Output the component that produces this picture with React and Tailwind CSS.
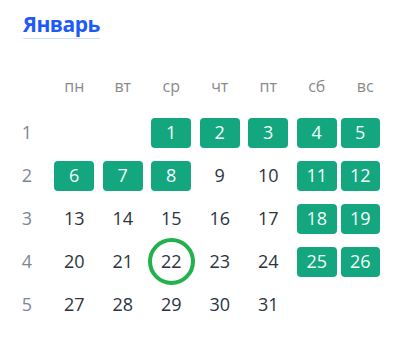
import React from 'react';

const weekdays = ['пн', 'вт', 'ср', 'чт', 'пт', 'сб', 'вс'];

// null = empty cell; marked days are shown in green boxes
const weeks = [
  [null, null, 1, 2, 3, 4, 5],
  [6, 7, 8, 9, 10, 11, 12],
  [13, 14, 15, 16, 17, 18, 19],
  [20, 21, 22, 23, 24, 25, 26],
  [27, 28, 29, 30, 31, null, null],
];

const marked = [1, 2, 3, 4, 5, 6, 7, 8, 11, 12, 18, 19, 25, 26];
const today = 22;

const DayCell = ({ day, last }) => {
  if (day === null) return <div className="h-[43px]" />;

  if (marked.includes(day)) {
    return (
      <div className="h-[43px] flex items-center justify-center">
        <div
          className={
            last
              ? 'w-[40px] h-[30px] mr-[10px] rounded-[4px] bg-[#13a67f] text-[#f3fffa] flex items-center justify-center'
              : 'w-[40px] h-[30px] rounded-[4px] bg-[#13a67f] text-[#f3fffa] flex items-center justify-center'
          }
        >
          {day}
        </div>
      </div>
    );
  }

  if (day === today) {
    return (
      <div className="h-[43px] flex items-center justify-center">
        <div className="w-[47px] h-[47px] shrink-0 rounded-full border-[4px] border-[#22b14c] flex items-center justify-center text-[#2b3440]">
          {day}
        </div>
      </div>
    );
  }

  return (
    <div className="h-[43px] flex items-center justify-center text-[#2b3440]">
      {day}
    </div>
  );
};

const App = () => {
  return (
    <div
      className="w-[419px] h-[352px] bg-white overflow-hidden"
      style={{ fontFamily: '"Open Sans", "Noto Sans", sans-serif' }}
    >
      <div className="pt-[10px] pl-[23px]">
        <h2 className="inline-block text-[21px] leading-[28px] tracking-[-0.5px] font-bold text-[#1e5bf6] border-b border-[#cfdcfb]">
          Январь
        </h2>
      </div>

      <div className="mt-[27px] pl-[4px] grid grid-cols-[46px_repeat(7,48.5px)] text-[18px]">
        <div className="h-[39px] mb-[6px]" />
        {weekdays.map((d) => (
          <div key={d} className="h-[39px] mb-[6px] flex items-center justify-center text-[16px] text-[#8a8a8a]">
            {d}
          </div>
        ))}

        {weeks.map((week, i) => (
          <React.Fragment key={i}>
            <div className="h-[43px] flex items-center justify-center text-[#7d8793]">
              {i + 1}
            </div>
            {week.map((day, j) => (
              <DayCell key={j} day={day} last={j === 6} />
            ))}
          </React.Fragment>
        ))}
      </div>
    </div>
  );
};

export default App;
